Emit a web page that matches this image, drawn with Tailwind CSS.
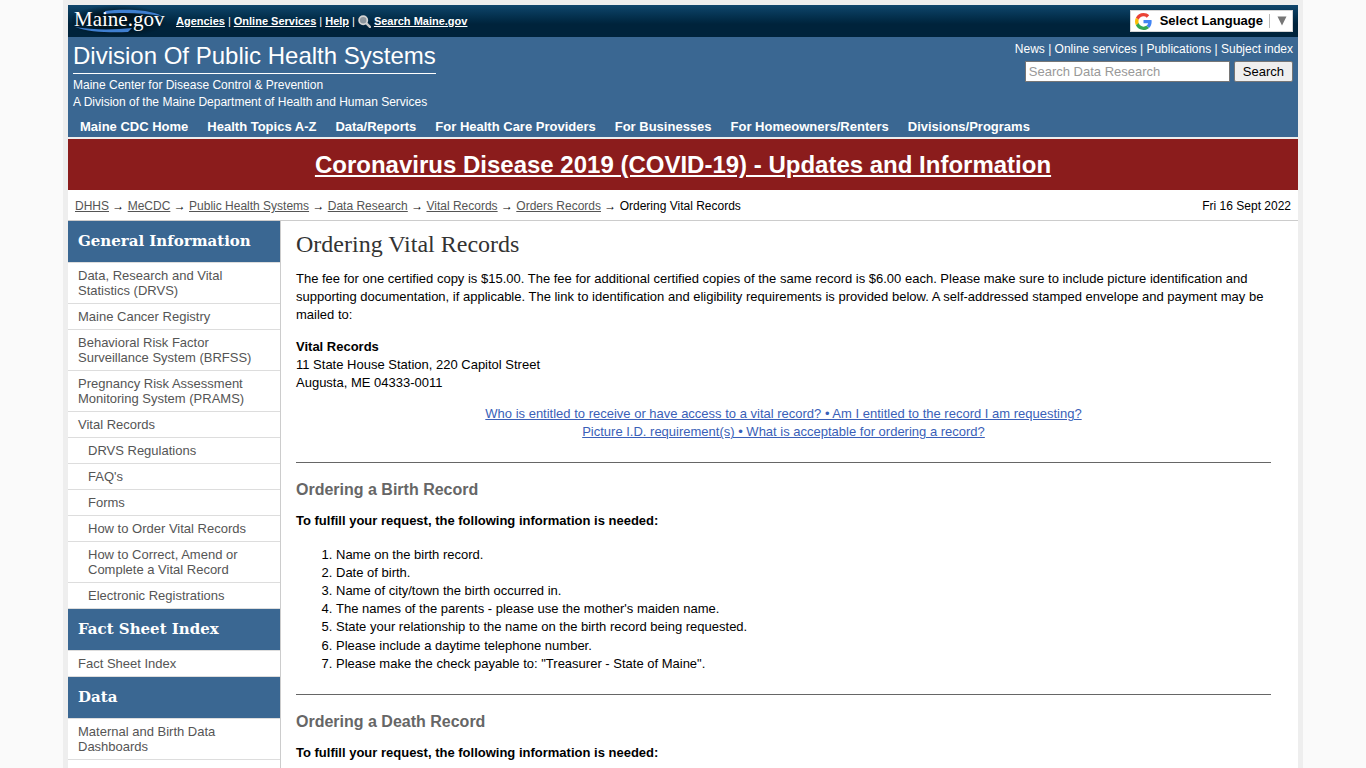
<!DOCTYPE html>
<html lang="en">
<head>
    <meta charset="UTF-8">
    <meta name="viewport" content="width=device-width, initial-scale=1.0">
    <title>Ordering Vital Records | Division Of Public Health Systems</title>
    <script src="https://cdn.jsdelivr.net/npm/@tailwindcss/browser@4"></script>
</head>
<body class="bg-[#fafafa] text-black font-['Liberation_Sans',Arial,sans-serif] text-[13px]">
    <div class="max-w-[1240px] mx-auto border-[5px] border-[#eeeeee] bg-white">

        <!-- Maine.gov bar -->
        <div class="flex items-center justify-between h-8 pl-1 pr-[5px] bg-linear-to-b from-[#10466c] to-[#00233b] to-60% text-white">
            <div class="flex items-center gap-2">
                <a href="#" aria-label="Maine.gov">
                    <svg class="w-24 h-8" viewBox="0 0 96 32">
                        <defs>
                            <radialGradient id="glow"><stop offset="0.5" stop-color="#001420"/><stop offset="1" stop-color="#001420" stop-opacity="0"/></radialGradient>
                        </defs>
                        <ellipse cx="46" cy="16" rx="50" ry="16" fill="url(#glow)"/>
                        <path d="M33 6 C50 4 76 4 90 11 C72 8 50 7 33 9 Z" fill="#3f7fd0"/>
                        <path d="M3 22 C20 25 42 25 60 23 L56 27 C38 28 16 27 3 22 Z" fill="#3f7fd0"/>
                        <text x="2" y="21" fill="#fff" font-family="Liberation Serif, serif" font-size="21">Maine.gov</text>
                    </svg>
                </a>
                <div class="flex items-center gap-[3px] text-[11px] font-bold">
                    <a href="#" class="underline">Agencies</a>
                    <span class="font-normal">|</span>
                    <a href="#" class="underline">Online Services</a>
                    <span class="font-normal">|</span>
                    <a href="#" class="underline">Help</a>
                    <span class="font-normal">|</span>
                    <svg class="w-[13px] h-[13px]" viewBox="0 0 12 12" fill="none">
                        <path d="M8 8 L11 11" stroke="#c8c8c8" stroke-width="2.2" stroke-linecap="round"/>
                        <circle cx="4.8" cy="4.8" r="3.8" fill="#8b959d" stroke="#d4d4d4" stroke-width="1.6"/>
                    </svg>
                    <a href="#" class="underline">Search Maine.gov</a>
                </div>
            </div>
            <button type="button" class="flex items-center h-[22px] bg-white text-black font-bold border border-[#d5d5d5] px-1">
                <svg class="w-[17px] h-[17px] mr-2" viewBox="0 0 48 48">
                    <path fill="#EA4335" d="M24 9.5c3.54 0 6.71 1.22 9.21 3.6l6.85-6.85C35.9 2.38 30.47 0 24 0 14.62 0 6.51 5.38 2.56 13.22l7.98 6.19C12.43 13.72 17.74 9.5 24 9.5z"/>
                    <path fill="#4285F4" d="M46.98 24.55c0-1.57-.15-3.09-.38-4.55H24v9.02h12.94c-.58 2.96-2.26 5.48-4.78 7.18l7.73 6c4.51-4.18 7.09-10.36 7.09-17.65z"/>
                    <path fill="#FBBC05" d="M10.53 28.59c-.48-1.45-.76-2.99-.76-4.59s.27-3.14.76-4.59l-7.98-6.19C.92 16.46 0 20.12 0 24c0 3.88.92 7.54 2.56 10.78l7.97-6.19z"/>
                    <path fill="#34A853" d="M24 48c6.48 0 11.93-2.13 15.89-5.81l-7.73-6c-2.15 1.45-4.92 2.3-8.16 2.3-6.26 0-11.57-4.22-13.47-9.91l-7.98 6.19C6.51 42.62 14.62 48 24 48z"/>
                </svg>
                <span>Select Language</span>
                <span class="h-3.5 w-px bg-[#bbbbbb] mx-1.5"></span>
                <svg class="w-3 h-3" viewBox="0 0 12 12"><path d="M1.5 1.5 H10.5 L6 10.5 Z" fill="#767676"/></svg>
            </button>
        </div>

        <!-- Division header -->
        <header class="bg-[#3a6792] text-white flex flex-col">
            <div class="flex justify-between px-[5px]">
                <div class="text-xs leading-[17px]">
                    <a href="#" class="inline-block text-2xl leading-[34px] pt-0.5 border-b border-white mb-[3px]">Division Of Public Health Systems</a>
                    <div>Maine Center for Disease Control &amp; Prevention</div>
                    <div>A Division of the Maine Department of Health and Human Services</div>
                </div>
                <div class="pt-1 text-xs leading-4">
                    <div class="text-right">
                        <a href="#">News</a> | <a href="#">Online services</a> | <a href="#">Publications</a> | <a href="#">Subject index</a>
                    </div>
                    <form class="flex justify-end gap-1 mt-1 text-[13px]">
                        <input type="text" aria-label="Search Data Research" placeholder="Search Data Research" class="w-[205px] h-[21px] px-[3px] bg-white text-black border border-[#767676] placeholder:text-[#999999]">
                        <button type="submit" class="h-[21px] px-2 bg-[#efefef] text-black border border-[#767676] rounded-xs">Search</button>
                    </form>
                </div>
            </div>
            <nav class="flex gap-[19px] pl-3 pt-2 pb-0.5 font-bold leading-4">
                <a href="#">Maine CDC Home</a>
                <a href="#">Health Topics A-Z</a>
                <a href="#">Data/Reports</a>
                <a href="#">For Health Care Providers</a>
                <a href="#">For Businesses</a>
                <a href="#">For Homeowners/Renters</a>
                <a href="#">Divisions/Programs</a>
            </nav>
        </header>

        <div class="bg-[#8b1c1c] text-white text-center text-2xl font-bold leading-[51px] border-t-2 border-[#eeeeee]">
            <a href="#" class="underline">Coronavirus Disease 2019 (COVID-19) - Updates and Information</a>
        </div>

        <!-- Breadcrumbs -->
        <div class="flex justify-between px-[7px] pt-0.5 text-xs leading-7 border-b border-[#cccccc]">
            <div>
                <a href="#" class="underline text-[#555555]">DHHS</a> →
                <a href="#" class="underline text-[#555555]">MeCDC</a> →
                <a href="#" class="underline text-[#555555]">Public Health Systems</a> →
                <a href="#" class="underline text-[#555555]">Data Research</a> →
                <a href="#" class="underline text-[#555555]">Vital Records</a> →
                <a href="#" class="underline text-[#555555]">Orders Records</a> →
                Ordering Vital Records
            </div>
            <span>Fri 16 Sept 2022</span>
        </div>

        <div class="flex">
            <!-- Side menu -->
            <nav class="w-[213px] shrink-0 border-r border-[#cccccc] text-[#555555] leading-[15px]">
                <h2 class="bg-[#3a6792] text-white font-['DejaVu_Serif',serif] font-bold text-[15px] leading-[41px] px-2.5 border-b border-[#dddddd]">General Information</h2>
                <ul>
                    <li class="border-b border-[#dddddd]"><a href="#" class="block py-[5px] px-2.5">Data, Research and Vital Statistics (DRVS)</a></li>
                    <li class="border-b border-[#dddddd]"><a href="#" class="block py-[5px] px-2.5">Maine Cancer Registry</a></li>
                    <li class="border-b border-[#dddddd]"><a href="#" class="block py-[5px] px-2.5">Behavioral Risk Factor Surveillance System (BRFSS)</a></li>
                    <li class="border-b border-[#dddddd]"><a href="#" class="block py-[5px] px-2.5">Pregnancy Risk Assessment Monitoring System (PRAMS)</a></li>
                    <li class="border-b border-[#dddddd]"><a href="#" class="block py-[5px] px-2.5">Vital Records</a></li>
                    <li class="border-b border-[#dddddd]"><a href="#" class="block py-[5px] px-5">DRVS Regulations</a></li>
                    <li class="border-b border-[#dddddd]"><a href="#" class="block py-[5px] px-5">FAQ's</a></li>
                    <li class="border-b border-[#dddddd]"><a href="#" class="block py-[5px] px-5">Forms</a></li>
                    <li class="border-b border-[#dddddd]"><a href="#" class="block py-[5px] px-5">How to Order Vital Records</a></li>
                    <li class="border-b border-[#dddddd]"><a href="#" class="block py-[5px] px-5">How to Correct, Amend or Complete a Vital Record</a></li>
                    <li class="border-b border-[#dddddd]"><a href="#" class="block py-[5px] px-5">Electronic Registrations</a></li>
                </ul>
                <h2 class="bg-[#3a6792] text-white font-['DejaVu_Serif',serif] font-bold text-[15px] leading-[41px] px-2.5 border-b border-[#dddddd]">Fact Sheet Index</h2>
                <ul>
                    <li class="border-b border-[#dddddd]"><a href="#" class="block py-[5px] px-2.5">Fact Sheet Index</a></li>
                </ul>
                <h2 class="bg-[#3a6792] text-white font-['DejaVu_Serif',serif] font-bold text-[15px] leading-[41px] px-2.5 border-b border-[#dddddd]">Data</h2>
                <ul>
                    <li class="border-b border-[#dddddd]"><a href="#" class="block py-[5px] px-2.5">Maternal and Birth Data Dashboards</a></li>
                    <li class="border-b border-[#dddddd]"><a href="#" class="block py-[5px] px-2.5">Death Data Dashboards</a></li>
                </ul>
            </nav>

            <!-- Content -->
            <main class="flex-1 pl-[15px] pr-[27px] leading-[1.4]">
                <h1 class="font-['Liberation_Serif',serif] text-2xl leading-7 text-[#333333] mt-[9px] mb-3">Ordering Vital Records</h1>
                <p class="mb-[13px]">The fee for one certified copy is $15.00. The fee for additional certified copies of the same record is $6.00 each. Please make sure to include picture identification and supporting documentation, if applicable. The link to identification and eligibility requirements is provided below. A self-addressed stamped envelope and payment may be mailed to:</p>
                <p class="mb-[13px]"><strong>Vital Records</strong><br>11 State House Station, 220 Capitol Street<br>Augusta, ME 04333-0011</p>
                <p class="mb-5 text-center text-[#3a5fb8]">
                    <a href="#" class="underline">Who is entitled to receive or have access to a vital record? • Am I entitled to the record I am requesting?</a><br>
                    <a href="#" class="underline">Picture I.D. requirement(s) • What is acceptable for ordering a record?</a>
                </p>
                <hr class="border-[#666666] mb-[17px]">
                <h2 class="text-base leading-5 font-bold text-[#666666] mb-3">Ordering a Birth Record</h2>
                <p class="font-bold mb-4">To fulfill your request, the following information is needed:</p>
                <ol class="list-decimal pl-10 mb-[21px]">
                    <li>Name on the birth record.</li>
                    <li>Date of birth.</li>
                    <li>Name of city/town the birth occurred in.</li>
                    <li>The names of the parents - please use the mother's maiden name.</li>
                    <li>State your relationship to the name on the birth record being requested.</li>
                    <li>Please include a daytime telephone number.</li>
                    <li>Please make the check payable to: "Treasurer - State of Maine".</li>
                </ol>
                <hr class="border-[#666666] mb-[17px]">
                <h2 class="text-base leading-5 font-bold text-[#666666] mb-3">Ordering a Death Record</h2>
                <p class="font-bold mb-4">To fulfill your request, the following information is needed:</p>
            </main>
        </div>
    </div>
</body>
</html>
